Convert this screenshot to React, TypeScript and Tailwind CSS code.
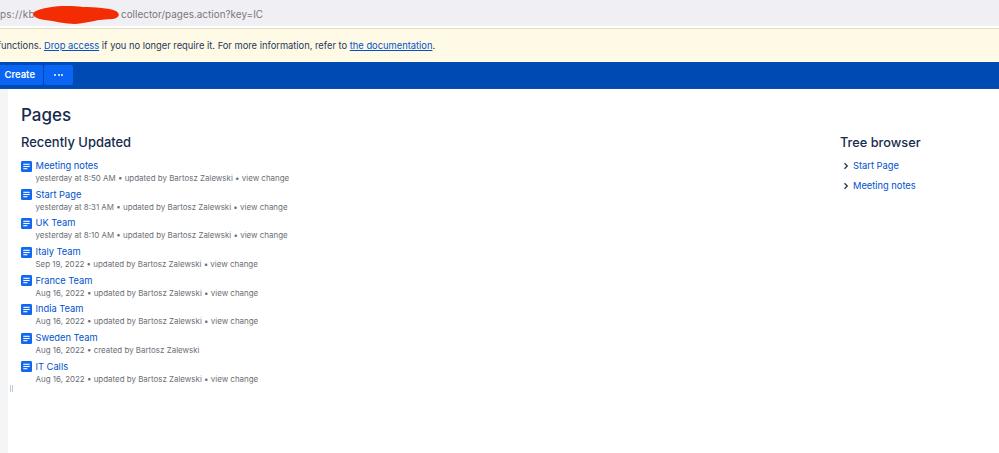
const font = { fontFamily: "Inter, 'Liberation Sans', sans-serif" };

const rows = [
  ["Meeting notes", "yesterday at 8:50 AM", "updated by Bartosz Zalewski", true],
  ["Start Page", "yesterday at 8:31 AM", "updated by Bartosz Zalewski", true],
  ["UK Team", "yesterday at 8:10 AM", "updated by Bartosz Zalewski", true],
  ["Italy Team", "Sep 19, 2022", "updated by Bartosz Zalewski", true],
  ["France Team", "Aug 16, 2022", "updated by Bartosz Zalewski", true],
  ["India Team", "Aug 16, 2022", "updated by Bartosz Zalewski", true],
  ["Sweden Team", "Aug 16, 2022", "created by Bartosz Zalewski", false],
  ["IT Calls", "Aug 16, 2022", "updated by Bartosz Zalewski", true],
] as const;

function PageIcon() {
  return (
    <svg width="11" height="11" viewBox="0 0 12 12" className="mt-[1.5px] shrink-0">
      <rect width="12" height="12" rx="1.5" fill="#1068f0" />
      <rect x="2.5" y="3" width="7" height="1.2" fill="#fff" />
      <rect x="2.5" y="5.4" width="7" height="1.2" fill="#fff" />
      <rect x="2.5" y="7.8" width="4.5" height="1.2" fill="#fff" />
    </svg>
  );
}

function Chevron() {
  return (
    <svg width="6" height="8" viewBox="0 0 6 8" className="shrink-0">
      <path d="M1.5 1.2 L4.3 4 L1.5 6.8" fill="none" stroke="#253858" strokeWidth="1.3" />
    </svg>
  );
}

export default function App() {
  return (
    <div className="relative flex h-[453px] w-[999px] flex-col overflow-hidden bg-white" style={font}>
      <div className="flex h-[26px] shrink-0 items-center overflow-hidden whitespace-nowrap bg-[#f0f0f4] pt-[3px] text-[9.9px] text-[#77777c]">
        <span className="ml-[-13px] w-[134px] shrink-0 tracking-[0.3px]">https://kb</span>
        <span className="tracking-[0.03px]">collector/pages.action?key=IC</span>
      </div>
      <svg className="absolute left-[31px] top-[4px]" width="90" height="21" viewBox="0 0 90 21">
        <path d="M3 8 C14 2 36 1 52 3 C64 3 78 4 85 7 C90 10 88 14 82 15 C66 15 58 19 44 20 C34 20 24 17 14 16 C6 15 0 12 3 8 Z" fill="#f42c04" />
      </svg>
      <div className="h-[2px] shrink-0 bg-white" />
      <div className="flex h-[34px] shrink-0 items-center overflow-hidden whitespace-nowrap border-t border-[#e3dcc0] bg-[#fffae6] text-[9.33px] text-[#253858]">
        <span className="ml-[-2.5px]">
          functions. <a className="text-[#0052cc] underline">Drop access</a> if you no longer require it. For more information, refer to{" "}
          <a className="text-[#0052cc] underline">the documentation</a>.
        </span>
      </div>
      <div className="flex h-[27px] shrink-0 items-center gap-px border-b border-[#0a4fb8] bg-[#004ab3]">
        <div className="flex h-[20px] w-[43px] items-center justify-end rounded-r-[2px] bg-[#0a66f2] pr-[8px] text-[9.5px] font-semibold text-white">
          Create
        </div>
        <div className="flex h-[20px] w-[29px] items-center justify-center gap-[1.5px] rounded-[2px] bg-[#0a66f2]">
          <i className="size-[2px] rounded-full bg-white" />
          <i className="size-[2px] rounded-full bg-white" />
          <i className="size-[2px] rounded-full bg-white" />
        </div>
      </div>
      <div className="flex min-h-0 flex-1">
        <div className="w-[8px] shrink-0 bg-[#f4f5f7]" />
        <div className="min-w-0 flex-1 pl-[13px]">
          <h1 className="mt-[14px] text-[17px] font-medium leading-[24px] text-[#172b4d]">Pages</h1>
          <div className="mt-[5px] flex">
            <div className="w-[819px] shrink-0">
              <h2 className="text-[12.95px] font-medium leading-[20px] text-[#172b4d]">Recently Updated</h2>
              <div className="mt-[7px] flex flex-col">
                {rows.map(([title, date, by, change]) => (
                  <div key={title} className="flex h-[28.7px] gap-[3.5px]">
                    <PageIcon />
                    <div className="min-w-0 whitespace-nowrap">
                      <div className="text-[9.3px] leading-[14px] text-[#0052cc]">{title}</div>
                      <div className="text-[7.95px] leading-[11px] text-[#6b6f76]">
                        {date} • {by}
                        {change ? " • view change" : ""}
                      </div>
                    </div>
                  </div>
                ))}
              </div>
            </div>
            <div>
              <h2 className="pt-[1px] text-[12.75px] font-medium leading-[20px] text-[#172b4d]">Tree browser</h2>
              <div className="mt-[4px] flex flex-col gap-[3px] pl-[3px] text-[9.3px] text-[#0052cc]">
                <div className="flex h-[17px] items-center gap-[4px]"><Chevron /><span>Start Page</span></div>
                <div className="flex h-[17px] items-center gap-[4px]"><Chevron /><span>Meeting notes</span></div>
              </div>
            </div>
          </div>
        </div>
      </div>
      <div className="absolute left-[10px] top-[385px] h-[7px] w-[3px] border-x border-[#c4c7cc]" />
    </div>
  );
}
